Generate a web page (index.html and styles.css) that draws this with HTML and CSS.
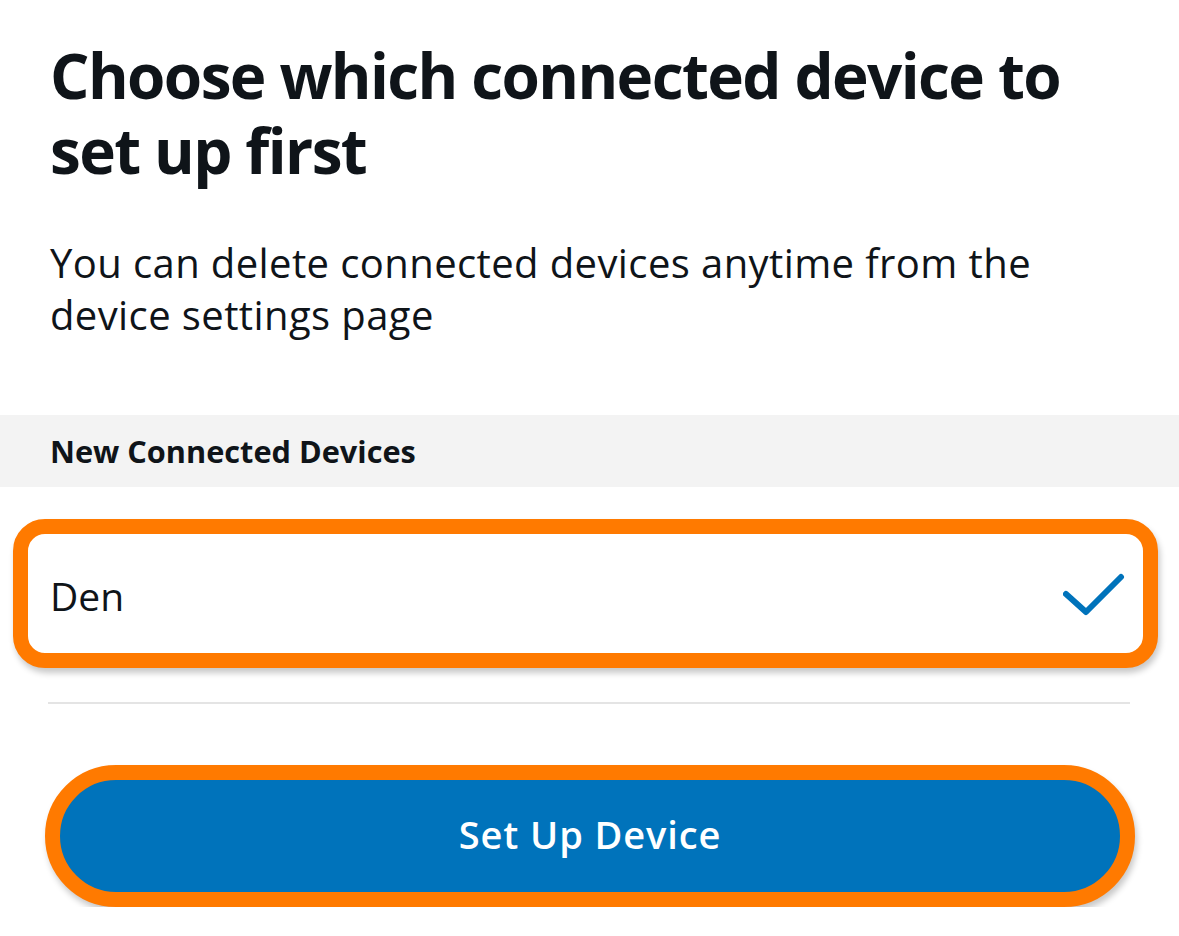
FILE: index.html
```html
<!DOCTYPE html>
<html lang="en">
<head>
<meta charset="utf-8">
<title>Choose device</title>
<link rel="stylesheet" href="styles.css">
</head>
<body>
<main class="page">
  <h1 class="title">Choose which connected device to set up first</h1>
  <p class="subtitle">You can delete connected devices anytime from the device settings page</p>
  <div class="section-head">New Connected Devices</div>
  <div class="device-card">
    <span class="device-name">Den</span>
    <svg class="check" width="62" height="44" viewBox="0 0 62 44" aria-hidden="true">
      <path d="M3 21 L23 39 L58 4" fill="none" stroke="#0073bb" stroke-width="6" stroke-linecap="round" stroke-linejoin="round"/>
    </svg>
  </div>
  <hr class="divider">
  <button class="primary-btn" type="button">Set Up Device</button>
</main>
</body>
</html>
```

FILE: styles.css
```css
html, body {
  margin: 0;
  padding: 0;
  background: #ffffff;
}

body {
  font-family: "Open Sans", "Noto Sans", "Liberation Sans", sans-serif;
  color: #0f1419;
}

.page {
  display: flex;
  flex-direction: column;
}

.title {
  margin: 38px 50px 0 50px;
  font-size: 62px;
  line-height: 75px;
  font-weight: 700;
  letter-spacing: -1.6px;
}

.subtitle {
  margin: 49px 50px 0 50px;
  font-size: 40px;
  line-height: 52px;
  font-weight: 400;
  letter-spacing: 0.4px;
}

.section-head {
  margin-top: 74px;
  height: 72px;
  background: #f3f3f3;
  padding: 0 50px;
  font-size: 30.7px;
  line-height: 72px;
  font-weight: 700;
}

.device-card {
  margin: 32px 21px 0 13px;
  border: 15px solid #ff7a00;
  border-radius: 32px;
  height: 119px;
  box-sizing: content-box;
  background: #ffffff;
  display: flex;
  align-items: center;
  justify-content: space-between;
  padding: 0 18px 0 22px;
  box-shadow: 2px 5px 6px rgba(0, 0, 0, 0.22);
}

.device-name {
  font-size: 39px;
  line-height: 1;
  padding-top: 4px;
}

.check {
  display: block;
  margin-top: 2px;
}

.divider {
  margin: 34px 49px 0 48px;
  border: 0;
  height: 2px;
  background: #e4e4e4;
}

.primary-btn {
  margin: 61px 44px 0 45px;
  height: 142px;
  box-sizing: border-box;
  border: 15px solid #ff7a00;
  border-radius: 71px;
  background: #0073bb;
  color: #ffffff;
  font-family: "Open Sans", "Noto Sans", "Liberation Sans", sans-serif;
  font-size: 38px;
  font-weight: 600;
  letter-spacing: 0.9px;
  padding: 0 0 5px 0;
  box-shadow: 2px 5px 6px rgba(0, 0, 0, 0.22);
}
```
